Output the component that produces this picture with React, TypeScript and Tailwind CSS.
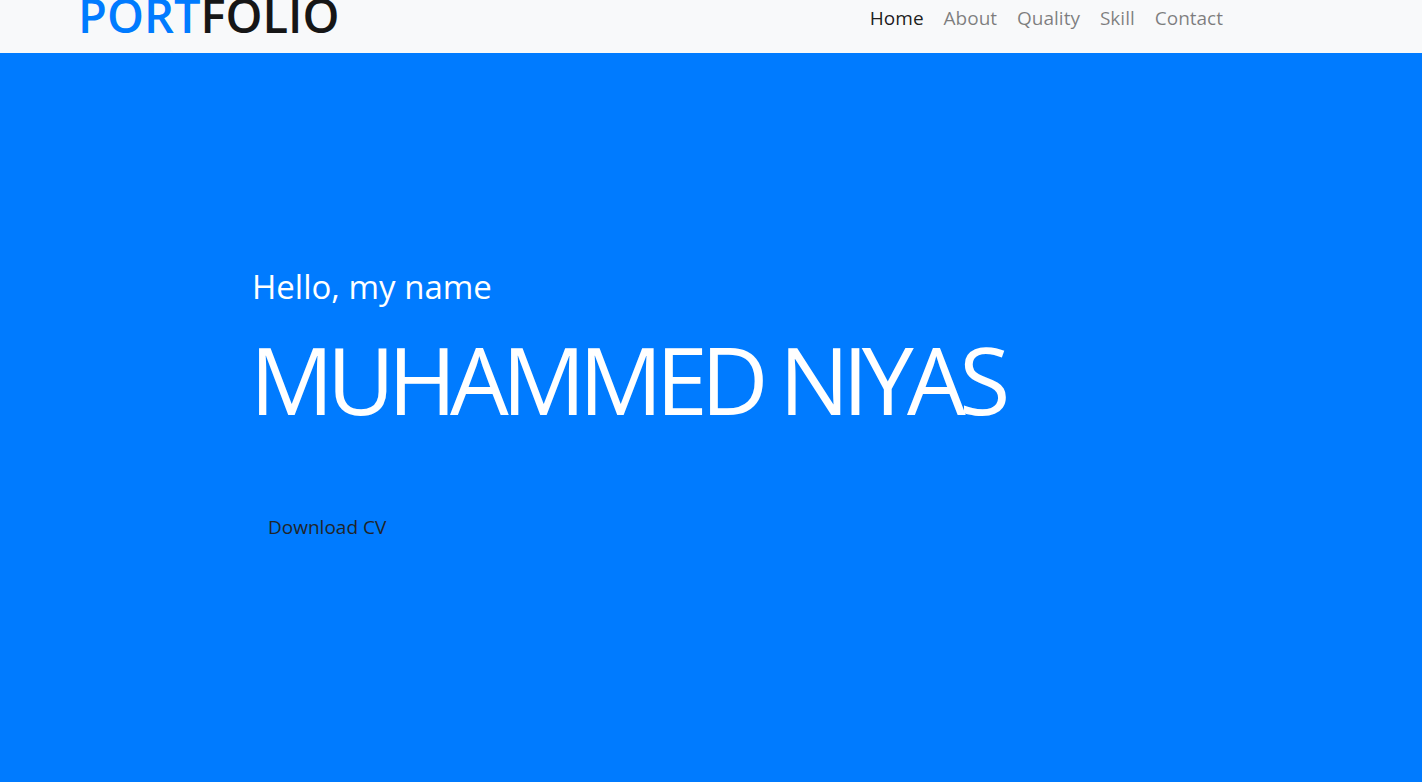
import React from "react";

const links = ["Home", "About", "Quality", "Skill", "Contact"];

export default function App() {
  return (
    <div className="min-h-screen bg-[#007bff] font-['Open_Sans',sans-serif]">
      {/* Navbar */}
      <nav className="h-[53px] bg-[#f8f9fa] flex items-start justify-between pl-[78px] pr-[199px] overflow-hidden">
        <a href="#" className="-mt-[17px] text-[47px] leading-[64px] font-semibold">
          <span className="text-[#007bff]">PORT</span>
          <span className="text-[#161616]">FOLIO</span>
        </a>
        <ul className="flex gap-5 pt-[4px]">
          {links.map((l, i) => (
            <li key={l}>
              <a
                href="#"
                className={`text-[19px] leading-[28px] ${i === 0 ? "text-black/90" : "text-black/50"}`}
              >
                {l}
              </a>
            </li>
          ))}
        </ul>
      </nav>

      {/* Hero */}
      <section className="pl-[252px] pt-[212px]">
        <h3 className="text-white text-[33px] leading-[44px]">Hello, my name</h3>
        <h1 className="text-white text-[93px] leading-[120px] mt-[10px] -ml-[2px] tracking-[-0.072em]">
          MUHAMMED NIYAS
        </h1>
        <button className="mt-[66px] px-4 py-2 text-[19px] text-[#212529]">Download CV</button>
      </section>
    </div>
  );
}
